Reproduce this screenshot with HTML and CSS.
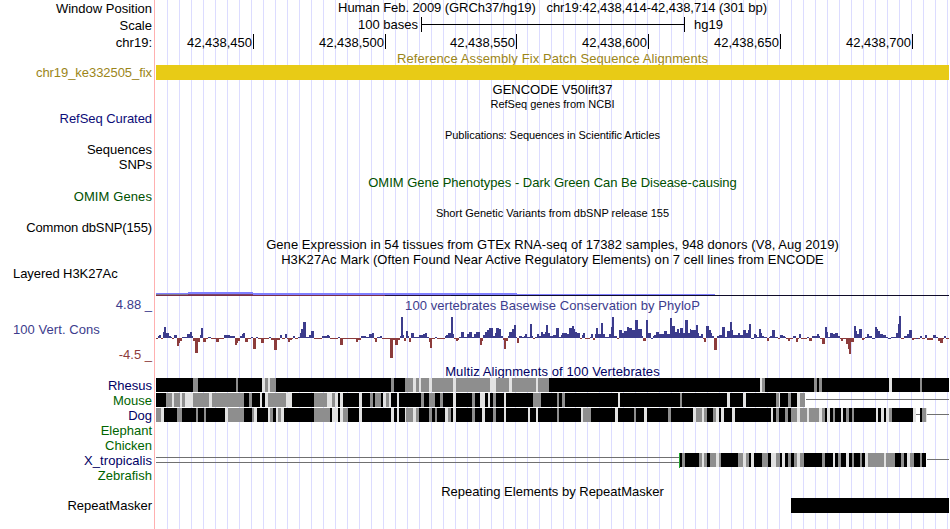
FILE: index.html
```html
<!DOCTYPE html>
<html lang="en">
<head>
    <meta charset="UTF-8">
    <meta name="viewport" content="width=device-width, initial-scale=1.0">
    <title>Human chr19:42,438,414-42,438,714</title>
    <link rel="stylesheet" href="styles.css">
</head>
<body>
    <div class="browser">
        <div class="row position">
            <div class="label">Window Position</div>
            <div class="lane title tight">Human Feb. 2009 (GRCh37/hg19) &nbsp; chr19:42,438,414-42,438,714 (301 bp)</div>
        </div>
        <div class="row scale">
            <div class="label">Scale</div>
            <div class="lane scale-lane">
                <span class="scale-text">100 bases</span>
                <span class="scale-bar"></span>
                <span>hg19</span>
            </div>
        </div>
        <div class="row ruler">
            <div class="label">chr19:</div>
            <div class="lane ruler-lane">
                <span class="tick first">42,438,450</span>
                <span class="tick">42,438,500</span>
                <span class="tick short">42,438,550</span>
                <span class="tick">42,438,600</span>
                <span class="tick">42,438,650</span>
                <span class="tick">42,438,700</span>
            </div>
        </div>

        <div class="row patch-title">
            <div class="label"></div>
            <div class="lane title gold wider">Reference Assembly Fix Patch Sequence Alignments</div>
        </div>
        <div class="row patch">
            <div class="label gold tight">chr19_ke332505_fix</div>
            <div class="lane patch-bar"></div>
        </div>

        <div class="tracks">
            <div class="row gencode">
                <div class="label"></div>
                <div class="lane title">GENCODE V50lift37</div>
            </div>
            <div class="row">
                <div class="label"></div>
                <div class="lane title small">RefSeq genes from NCBI</div>
            </div>
            <div class="row"><div class="label navy tight">RefSeq Curated</div></div>
            <div class="row pubs">
                <div class="label"></div>
                <div class="lane title small tight">Publications: Sequences in Scientific Articles</div>
            </div>
            <div class="row"><div class="label">Sequences</div></div>
            <div class="row"><div class="label">SNPs</div></div>

            <div class="row omim">
                <div class="label"></div>
                <div class="lane title green">OMIM Gene Phenotypes - Dark Green Can Be Disease-causing</div>
            </div>
            <div class="row"><div class="label green wider">OMIM Genes</div></div>
            <div class="row snp">
                <div class="label"></div>
                <div class="lane title small">Short Genetic Variants from dbSNP release 155</div>
            </div>
            <div class="row"><div class="label tighter">Common dbSNP(155)</div></div>

            <div class="row gtex">
                <div class="label"></div>
                <div class="lane title wide">Gene Expression in 54 tissues from GTEx RNA-seq of 17382 samples, 948 donors (V8, Aug 2019)</div>
            </div>
            <div class="row">
                <div class="label"></div>
                <div class="lane title wide">H3K27Ac Mark (Often Found Near Active Regulatory Elements) on 7 cell lines from ENCODE</div>
            </div>
            <div class="row histone">
                <div class="label left tight">Layered H3K27Ac</div>
                <div class="lane">
                    <svg class="plot" width="793" height="31" viewBox="156 267 793 31" shape-rendering="crispEdges">
                        <path fill="#7f7fff" d="M156 293h32v-1h65v1h264v1h198v1H156z"/>
                        <path fill="#807a90" d="M156 294h32v1h-32z"/>
                        <path fill="#7b4468" d="M188 294h65v1h-65z"/>
                        <path fill="#7c2f46" d="M156 295h229v1H156z"/>
                        <path fill="#2a1238" d="M385 295h66v1h-66z"/>
                        <path fill="#100c28" d="M451 295h498v1H451z"/>
                    </svg>
                </div>
            </div>

            <div class="row phylop-title">
                <div class="label blue">4.88 _</div>
                <div class="lane title blue wide">100 vertebrates Basewise Conservation by PhyloP</div>
            </div>
            <div class="row phylop">
                <div class="label phylop-label">
                    <span class="blue name wide">100 Vert. Cons</span>
                    <span class="red">-4.5 _</span>
                </div>
                <div class="lane"><svg class="plot" id="phylop" width="793" height="51" viewBox="156 313 793 51" shape-rendering="crispEdges"></svg></div>
            </div>

            <div class="row multiz">
                <div class="label"></div>
                <div class="lane title navy2 wider">Multiz Alignments of 100 Vertebrates</div>
            </div>
        </div>

        <div class="species">
            <div class="row">
                <div class="label navy2">Rhesus</div>
                <div class="lane"><svg class="plot" id="rhesus" width="793" height="15" viewBox="156 0 793 15" shape-rendering="crispEdges"></svg></div>
            </div>
            <div class="row">
                <div class="label forest">Mouse</div>
                <div class="lane"><svg class="plot" id="mouse" width="793" height="15" viewBox="156 0 793 15" shape-rendering="crispEdges">
                    <path class="gap" d="M806 6h143v1H806z"/>
                </svg></div>
            </div>
            <div class="row">
                <div class="label navy2">Dog</div>
                <div class="lane"><svg class="plot" id="dog" width="793" height="15" viewBox="156 0 793 15" shape-rendering="crispEdges">
                    <path fill="white" d="M916 0h4v14h-4z"/>
                    <path class="gap" d="M916 6h4v1h-4zM927 6h22v1h-22z"/>
                </svg></div>
            </div>
            <div class="row"><div class="label forest">Elephant</div></div>
            <div class="row"><div class="label forest">Chicken</div></div>
            <div class="row">
                <div class="label navy2 wide">X_tropicalis</div>
                <div class="lane"><svg class="plot" id="xtropicalis" width="793" height="15" viewBox="156 0 793 15" shape-rendering="crispEdges">
                    <path class="gap" d="M156 4h523v1H156zM156 9h523v1H156zM927 6h22v1h-22z"/>
                    <path fill="#20a030" d="M679 0h1v15h-1z"/>
                </svg></div>
            </div>
            <div class="row"><div class="label forest">Zebrafish</div></div>
        </div>

        <div class="row repeat-title">
            <div class="label"></div>
            <div class="lane title">Repeating Elements by RepeatMasker</div>
        </div>
        <div class="row">
            <div class="label">RepeatMasker</div>
            <div class="lane repeat-lane"><div class="repeat"></div></div>
        </div>
    </div>

    <script src="tracks.js"></script>
</body>
</html>
```
FILE: styles.css
```css
body {
    margin: 0;
    background: white;
    color: black;
    font-family: "Liberation Sans", Arial, Helvetica, sans-serif;
    font-size: 13px;
    line-height: 15px;
    overflow: hidden;
}

/* pink divider and blue guide lines every 12px */
.browser {
    width: 949px;
    height: 529px;
    background-image:
        linear-gradient(#ffb0b0, #ffb0b0),
        repeating-linear-gradient(to right, #dcdcff 0, #dcdcff 1px, transparent 1px, transparent 12px);
    background-size: 1px 100%, 782px 100%;
    background-position: 154px 0, 167px 0;
    background-repeat: no-repeat;
}

.row {
    display: grid;
    grid-template-columns: 152px 793px;
    column-gap: 4px;
    height: 15px;
    white-space: nowrap;
}

.label {
    text-align: right;
}

.tracks .label {
    margin-top: -1px;
}

.left {
    text-align: left;
    padding-left: 13px;
}

.title {
    text-align: center;
}

.small {
    font-size: 11px;
}

.tighter { letter-spacing: -0.12px; }
.tight { letter-spacing: -0.06px; }
.wide { letter-spacing: 0.06px; }
.wider { letter-spacing: 0.1px; }

.plot {
    display: block;
}

.gold { color: #9b8519; }
.navy { color: #0c0c78; }
.navy2 { color: #000064; }
.green { color: #005000; }
.forest { color: #006400; }
.blue { color: #3c3c8c; }
.red { color: #8c3c3c; }

/* header */
.position { height: 17px; }
.position .label { padding-top: 1px; }

.scale { height: 17px; }
.scale .label { padding-top: 1px; }

.scale-lane {
    display: flex;
}

.scale-text {
    width: 262px;
    margin-right: 3px;
    text-align: right;
}

.scale-bar {
    width: 262px;
    height: 15px;
    margin-right: 9px;
    border-left: 1px solid black;
    border-right: 1px solid black;
    background: linear-gradient(black, black) 0 7px / 100% 1px no-repeat;
}

.ruler { height: 17px; }
.ruler .label { padding-top: 1px; }

.ruler-lane {
    display: flex;
}

.tick {
    box-sizing: border-box;
    width: 132px;
    height: 15px;
    padding-top: 1px;
    padding-right: 1px;
    border-right: 1px solid black;
    text-align: right;
}

.tick.first { width: 98px; }
.tick.short { width: 131px; }

/* tracks */
.patch-title { height: 14px; }

.patch-bar {
    position: relative;
    background: #e8cb16;
}

.gencode { margin-top: 2px; }
.pubs { margin-top: 1px; }
.omim { margin-top: 2px; }
.snp { margin-top: 1px; }
.gtex { margin-top: 1px; }
.histone { height: 31px; }
.phylop { height: 51px; }
.multiz { height: 14px; }
.repeat-title { margin-top: 1px; height: 14px; }

.phylop-label {
    display: flex;
    flex-direction: column;
    justify-content: space-between;
    box-sizing: border-box;
    height: 51px;
    padding: 10px 0 1px;
}

.phylop-label .name {
    padding-left: 13px;
    text-align: left;
}

.gap { fill: #707070; }

.repeat-lane {
    display: flex;
    justify-content: flex-end;
}

.repeat {
    width: 158px;
    background: black;
}
```
FILE: tracks.js
```js
const SVG = 'http://www.w3.org/2000/svg';
const END = 949;

// Each entry is "x:value" and runs up to the x of the next entry.
function steps(text) {
    const list = text.trim().split(/\s+/).map(s => s.split(':'));
    return list.map(([x, v], i) => ({
        x: +x,
        w: (i + 1 < list.length ? +list[i + 1][0] : END) - x,
        v: v
    }));
}

function rect(svg, x, y, w, h, fill) {
    const r = document.createElementNS(SVG, 'rect');
    r.setAttribute('x', x);
    r.setAttribute('y', y);
    r.setAttribute('width', w);
    r.setAttribute('height', h);
    r.setAttribute('fill', fill);
    svg.appendChild(r);
}

// conservation scores, in pixels above or below the zero line
const phylop = `
156:-1 158:2 159:3 161:-1 163:6 164:11 166:5 169:2 171:1 172:-1 174:3 177:-8 179:-5 180:-3 182:1 187:4 190:6 192:2
193:-3 195:-15 198:-4 200:3 201:10 203:-4 206:-1 208:1 211:-1 216:-4 219:-1 224:3 230:2 235:-7 237:-5 238:-3 240:2
242:4 243:5 245:-4 248:-1 251:1 253:-11 256:1 258:-1 261:-5 264:-1 269:1 271:-2 274:-12 277:-2 280:3 282:-1 285:4
287:-1 288:-4 290:-2 292:-1 293:2 295:-1 298:1 300:5 301:9 303:16 306:1 309:3 311:7 314:-1 322:2 327:3 329:2 330:-1
338:1 340:-7 343:-1
356:-4 358:-2 361:2 366:1 369:4 372:5 374:-1 375:-4 377:1 380:2 382:-1 390:-20 393:-2 395:-7 398:-2 400:2 401:21
403:3 404:-3 406:7 408:2 409:-4 411:5 414:1 419:3 423:4 425:5 427:1 429:-4 430:-10 432:-1 435:1 437:-1 445:2 446:3
448:5 451:21 453:4 454:-1 456:-3 458:-2 459:1 461:6 464:1 467:4 469:6 472:1 474:4 476:6 480:-7 482:-3 483:3 485:6
487:8 489:10 493:2 495:5 496:10 499:9 501:2 503:-2 504:-11 506:-3 508:2 509:6 512:9 514:13 516:1 517:-5 519:2 522:1
524:2 525:4 527:1 530:14 532:2 533:-1 535:1 537:4 539:2 541:6 543:4 545:6 546:13 548:5
550:2 553:3 556:10 559:1 561:3 562:5 567:4 569:10 572:12 574:9 575:6 577:5 580:-1 582:3 583:5 585:-1 590:1 591:4
593:-2 595:4 596:10 598:4 601:15 603:4 605:1 609:4 611:11 612:21 614:2 617:-1 619:8 622:5 624:7 627:11 629:10 632:8
635:18 638:9 642:2 643:-3 646:18 648:5 651:0 653:2 654:3 656:6 659:4 664:7 667:4 670:20 672:12 675:6 677:9 679:5
680:10 683:5 685:18 688:5 690:9 691:8 696:13 698:5 699:2 701:4 703:-1 704:-4 706:12 709:8 711:5 712:2 714:-12 717:2
719:3 722:11 725:1 727:7 730:16 732:8 733:3 738:5 740:3 743:8 746:5 748:8 749:14
751:0 754:4 756:3 757:1 759:9 761:5 762:2 764:1 767:-3 769:1 770:2 772:8 775:1 778:-1 780:3 783:2 785:1 786:-1
788:-3 790:-1 793:2 796:-4 798:-1 799:4 801:-1 807:1 809:-3 812:2 817:4 819:2 820:-1 822:-6 825:11 827:6 828:1 830:5
833:4 835:5 838:2 840:-1 841:-3 843:-1 846:-6 848:-11 849:-16 851:-4 854:12 856:7 857:4 859:9 862:-2 864:-1 865:1
867:4 869:2 872:0 875:11 877:9 878:7 880:4 883:3 886:1 888:0 891:1 896:5 898:14 899:22 901:-1 904:2 907:4 909:8
912:-2 914:-1 916:0 918:-1 920:2 922:-1 925:3 927:-2 933:3 936:1 938:-3 940:-5 943:-1 944:2 946:-1`;

const zero = 338;
const wiggle = document.getElementById('phylop');
steps(phylop).forEach(s => {
    const v = +s.v;
    if (v > 0) rect(wiggle, s.x, zero - v, s.w, v, '#3c3c8c');
    else if (v < 0) rect(wiggle, s.x, zero, s.w, -v, '#8c3c3c');
    else rect(wiggle, s.x, zero, s.w, 1, '#3c3c8c');
});

// b = identical, g = partial, l = weak, n = nothing aligned
const shades = { b: '#000000', g: '#8e8e8e', l: '#e2e2e2' };

const alignments = {
    rhesus: `
156:b 193:g 198:b 236:g 238:b 262:l 265:g 268:l 270:g 276:b 391:g 394:b 405:g 413:l 416:g 419:l 421:g 429:l 432:g
453:l 456:g 490:l 496:g 509:l 512:g 536:l 538:g 549:b 760:l 762:g 765:b 814:g 817:b 819:g 822:b 889:l 892:b 920:g 922:b`,
    mouse: `
156:b 166:g 172:l 174:g 180:l 182:g 185:l 193:g 209:l 212:g 244:b 249:g 252:b 260:l 262:b 265:l 268:g 286:l 292:b
314:g 327:l 332:g 335:l 338:b 340:l 343:b 359:l 362:b 370:g 373:b 375:g 381:b 383:l 386:g 389:l 391:b 397:l 399:b
421:g 424:b 429:g 435:b 440:g 443:b 453:l 456:b 472:g 475:b 480:l 485:b 488:l 490:b 493:g 496:b 504:l 506:b 533:g
541:b 557:g 559:b 562:g 565:b 618:l 620:b 680:g 682:b 727:l 730:b 743:l 746:b 776:g 779:l 780:b 788:g 791:b 797:l
800:g 805:n`,
    dog: `
156:g 161:l 164:b 177:g 182:b 196:g 198:b 204:g 206:b 225:l 228:g 244:b 252:g 254:l 257:b 268:l 270:g 273:b 276:l
278:g 281:l 284:b 314:g 330:b 332:l 338:b 340:l 343:g 348:b 359:l 362:b 391:l 394:b 397:l 399:b 405:l 406:g 413:l
416:g 419:b 429:g 432:b 435:g 437:b 445:l 448:g 451:b 453:l 456:b 472:g 475:b 482:l 485:b 493:g 496:b 504:l 506:b
528:l 530:b 536:l 538:b 557:g 559:b 581:l 583:g 591:b 615:l 618:b 634:g 636:b 644:l 647:b 668:g 671:b 693:l 696:g
702:l 704:g 707:b 713:g 716:l 719:b 721:l 724:b 732:l 735:b 771:l 773:b 776:g 779:b 785:g 788:b 791:g 797:l 800:g
807:l 809:g 819:l 822:g 825:b 827:l 830:b 833:g 835:b 841:l 843:b 846:g 849:b 852:g 854:b 876:l 878:b 881:l 884:b
886:l 889:g 892:b 913:l 916:n 920:b 922:g 926:l 927:n`,
    xtropicalis: `
680:b 682:g 685:b 699:g 702:l 704:g 707:b 710:g 716:l 719:g 721:b 738:g 743:l 746:g 749:b 751:l 754:b 762:g 768:b
771:l 776:g 780:b 782:l 785:b 788:g 791:b 794:g 797:l 800:g 804:b 822:g 825:b 833:l 835:b 838:g 841:b 846:l 849:b
852:g 854:b 860:g 862:b 865:l 868:g 884:l 886:g 895:b 901:g 904:b 907:l 910:g 914:b 920:g 922:b 926:n`
};

for (const id in alignments) {
    const svg = document.getElementById(id);
    steps(alignments[id]).forEach(s => {
        if (s.v !== 'n') rect(svg, s.x, 0, s.w, 14, shades[s.v]);
    });
}
```
